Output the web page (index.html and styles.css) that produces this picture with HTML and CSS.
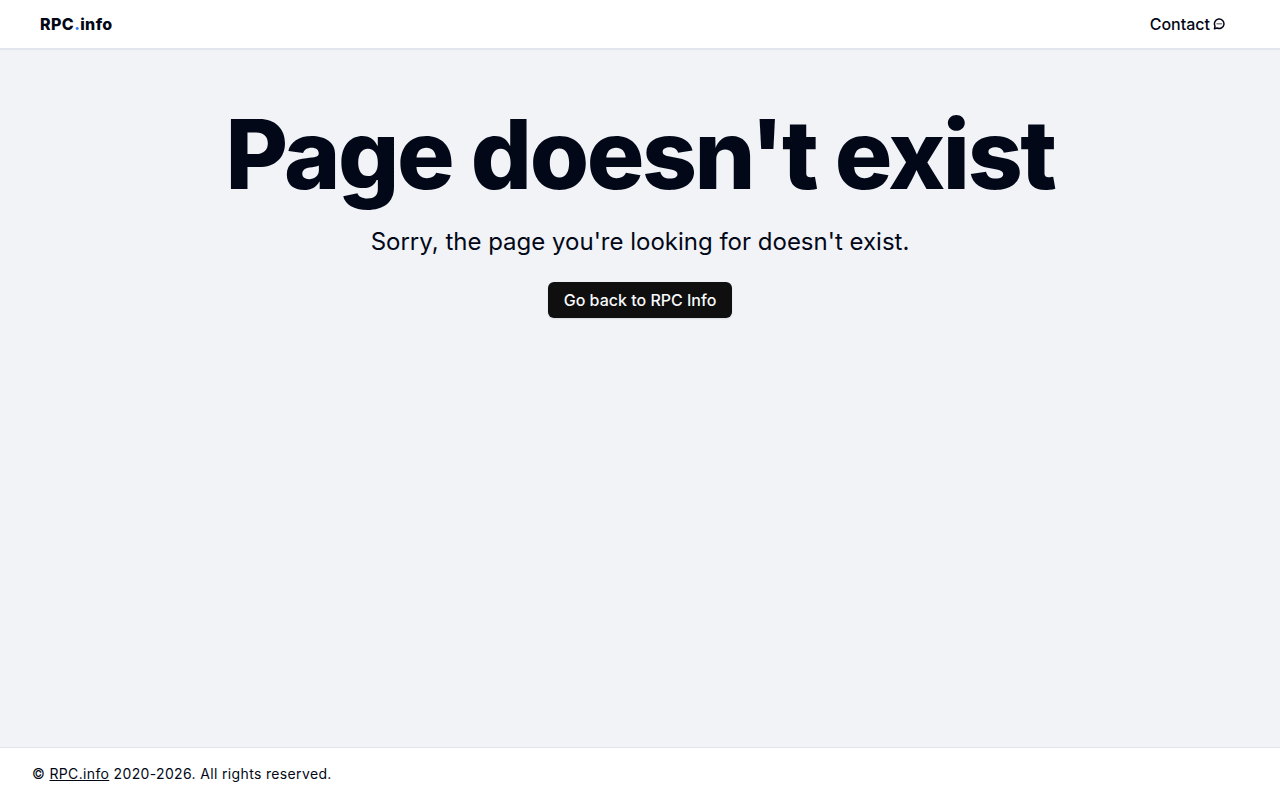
FILE: index.html
```html
<!DOCTYPE html>
<html lang="en">
<head>
	<meta charset="UTF-8">
	<meta name="viewport" content="width=device-width, initial-scale=1">
	<title>RPC.info</title>
	<link rel="stylesheet" href="styles.css">
</head>
<body>
	<header class="header">
		<a href="#" class="logo">RPC<span class="dot">.</span>info</a>
		<a href="#" class="contact">Contact
			<svg class="icon" viewBox="0 0 24 24" fill="none" stroke="currentColor" stroke-width="3" stroke-linecap="round" stroke-linejoin="round">
				<path d="M3 21.500l1-5.500a9.500 9.500 0 1 1 4 4z"/>
				<path d="M8 11.500h9" stroke-opacity="0.5"/>
			</svg>
		</a>
	</header>
	<main class="main">
		<h1 class="title">Page doesn't exist</h1>
		<p class="text">Sorry, the page you're looking for doesn't exist.</p>
		<a href="#" class="button">Go back to RPC Info</a>
	</main>
	<footer class="footer">
		<p class="copyright">© <a href="#">RPC.info</a> 2020-2026. All rights reserved.</p>
	</footer>
</body>
</html>
```
FILE: styles.css
```css
body{
	display: flex;
	flex-direction: column;
	min-height: 100vh;
	margin: 0;
	font-family: Inter, "Liberation Sans", sans-serif;
	font-size: 16px;
	line-height: 24px;
	color: #020817;
	background-color: #f1f3f7;
}
a{
	color: inherit;
}
.header{
	display: flex;
	justify-content: space-between;
	align-items: center;
	padding: 12px 55px 12px 40px;
	background: #fff;
	border-bottom: 2px solid #e2e6ec;
}
.logo{
	font-weight: 800;
	letter-spacing: 0.025em;
	text-decoration: none;
}
.dot{
	color: #3b82f6;
}
.contact{
	display: flex;
	align-items: center;
	gap: 3px;
	font-weight: 500;
	text-decoration: none;
}
.icon{
	width: 12px;
	height: 12px;
}
.main{
	display: flex;
	flex-direction: column;
	flex: 1;
	align-items: center;
	gap: 24px;
	padding: 56px 16px;
	text-align: center;
}
.title{
	margin: 0;
	font-size: 96px;
	font-weight: 800;
	line-height: 96px;
	letter-spacing: -0.025em;
}
.text{
	margin: 0;
	font-size: 24px;
	line-height: 32px;
}
.button{
	padding: 6px 16px;
	font-weight: 500;
	text-decoration: none;
	color: #f8fafc;
	background: #0f0f10;
	border-radius: 6px;
	box-shadow: 0 1px 2px rgba(0, 0, 0, 0.1);
}
.footer{
	padding: 16px 32px;
	background: #fff;
	border-top: 1px solid #e2e6ec;
}
.copyright{
	margin: 0;
	font-size: 14px;
	line-height: 20px;
	letter-spacing: 0.025em;
}
```
